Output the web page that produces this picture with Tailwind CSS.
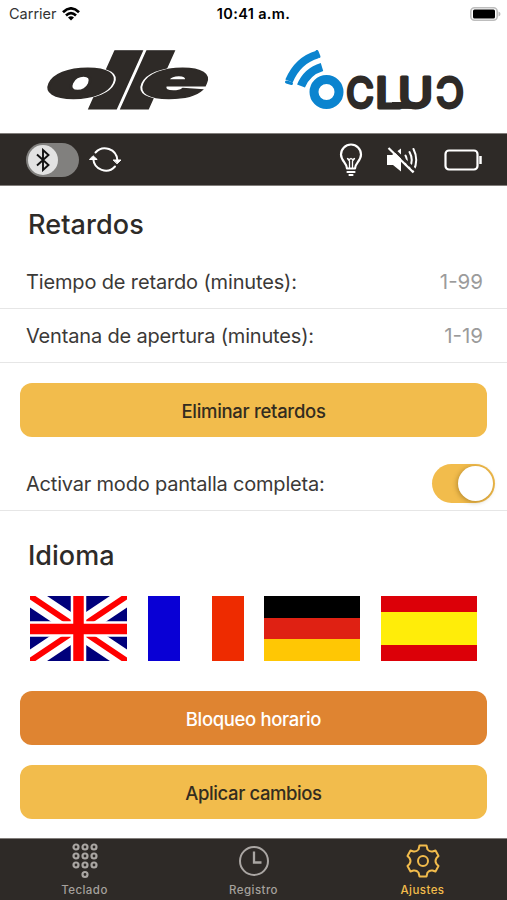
<!DOCTYPE html>
<html lang="es">
<head>
<meta charset="utf-8">
<title>Ajustes</title>
<script src="https://cdn.jsdelivr.net/npm/@tailwindcss/browser@4"></script>
</head>
<body class="w-[507px] h-[900px] overflow-hidden bg-white font-['Inter','Roboto',sans-serif] text-[#2e2b28] flex flex-col">
<!-- Status bar -->
<header class="h-[28px] shrink-0 grid grid-cols-3 items-center text-black">
  <div class="flex items-center gap-[5px] pl-[9px] text-[14.5px] text-[#333]"><span>Carrier</span>
    <svg width="18" height="14" viewBox="0 0 18 14" fill="none" stroke="#000" stroke-width="2.7"><path d="M1 5.2Q9-2.4 17 5.2M4 8.4Q9 3.8 14 8.4"/><path d="M6 10.5Q9 8 12 10.5L9 13.6Z" fill="#000" stroke="none"/></svg>
  </div>
  <div class="text-center text-[14.5px] font-semibold whitespace-nowrap tracking-[0.35px]">10:41 a.m.</div>
  <div class="flex justify-end pr-[6px]"><svg width="31" height="14" viewBox="0 0 31 14"><rect x=".8" y=".8" width="26.4" height="12.4" rx="3.8" fill="#fff" stroke="#bdbdbd" stroke-width="1.6"/><rect x="3" y="2.5" width="22" height="9" rx="1.5"/><path d="M28.500 4.500q2 .7 2 2.500t-2 2.500z" fill="#bbb"/></svg></div>
</header>
<!-- Brands -->
<div class="h-[105px] shrink-0">
<svg width="507" height="105" viewBox="0 28 507 105" font-family="Inter" fill="#2e2a27">
  <g font-weight="900">
    <g stroke="#2e2a27" stroke-width="1">
    <text transform="matrix(1 0 -.45 1 82 109)" font-size="80" textLength="41" lengthAdjust="spacingAndGlyphs">l</text>
    <text transform="matrix(1 0 -.45 1 114 109)" font-size="80" textLength="41" lengthAdjust="spacingAndGlyphs">l</text>
    </g>
    <g style="filter:drop-shadow(2px 0 0 #fff) drop-shadow(-2px 0 0 #fff)" stroke="#2e2a27" stroke-width="1.500">
    <text transform="matrix(1 0 -.45 1 40 98)" font-size="54" textLength="68" lengthAdjust="spacingAndGlyphs">o</text>
    <text transform="matrix(1 0 -.45 1 135 98)" font-size="54" textLength="67" lengthAdjust="spacingAndGlyphs">e</text>
    </g>
  </g>
  <g fill="none" stroke="#0b84cf">
    <circle cx="326.500" cy="92" r="12.500" stroke-width="9"/>
    <path d="M301 86Q307 71.500 322 67" stroke-width="8.500"/>
    <path d="M289 81Q298 60 317.500 54.500" stroke-width="8"/>
    <path d="M286.500 82L291.500 83.500M317 51.500L319 56.500" stroke-width="3" stroke-linejoin="round" stroke-linecap="round"/>
  </g>
  <g font-weight="500" font-size="43" stroke="#2e2a27" stroke-width="2.800" stroke-linejoin="round">
    <text x="346" y="107.500" textLength="28" lengthAdjust="spacingAndGlyphs">C</text>
    <text transform="translate(375 107.500) scale(1.120 1)" letter-spacing="-4">LU</text>
    <text transform="translate(464 107.500) scale(-1 1)" textLength="28" lengthAdjust="spacingAndGlyphs">C</text>
  </g>
  <rect x="392" y="102" width="22" height="6.900"/>
</svg>
</div>
<!-- Device toolbar -->
<div class="h-[53px] shrink-0 bg-[#2e2a27] border-y border-[#817d7a] flex items-center pl-[26px] pr-[25px]">
  <div class="w-[53px] h-[34px] rounded-full bg-[#81807e] p-[2px]">
    <div class="size-[30px] rounded-full bg-[#e2e2e2] flex items-center justify-center"><svg width="14" height="24" viewBox="0 0 14 24" fill="none" stroke="#111" stroke-width="1.9"><path d="M1 6.500L12.500 17 7 22V2L12.500 7 1 17.500"/></svg></div>
  </div>
  <svg class="ml-[10px]" width="33" height="30" viewBox="0 0 33 30" fill="none" stroke="#fff" stroke-width="2" stroke-linecap="round"><path d="M6.500 7.500A12.500 12.500 0 0 1 28.300 15M26 21.500A12.500 12.500 0 0 1 4.300 14"/><path d="M24.500 15H32L28.300 18.500ZM.800 14.500H8.200L4.300 11Z" fill="#fff" stroke-width="1" stroke-linejoin="round"/></svg>
  <div class="ml-auto flex items-center">
    <svg width="24" height="34" viewBox="0 0 24 34" fill="none" stroke="#fff" stroke-width="2.200" stroke-linecap="round" stroke-linejoin="round"><path d="M8 25.500C8 20 2 18 2 11.500A10 10 0 0 1 22 11.500C22 18 16 20 16 25.500ZM8.500 29H15.500M10.500 32H13.500"/><path d="M10.500 25V18L8.500 15.500 10.500 16.500 12 15.500 13.500 16.500 15.500 15.500 13.500 18V25" stroke-width="1.300"/></svg>
    <svg class="ml-[23px]" width="33" height="28" viewBox="0 0 33 28" fill="none" stroke="#fff" stroke-width="2"><path d="M1 9H6L15 2.500V25.500L7 19H1Z" fill="#fff" stroke="none"/><path d="M19.500 9.500Q22 14 19.500 18.500M23.500 6Q28 14 23.500 22M27.500 3Q33 14 27.500 25" stroke-linecap="round"/><path d="M4.500 .5L30 25" stroke="#2e2a27" stroke-width="3"/><path d="M2.500 2L27.500 26.500" stroke-width="2.200"/></svg>
    <svg class="ml-[25px]" width="38" height="22" viewBox="0 0 38 22" fill="none" stroke="#fff" stroke-width="2.200"><rect x="1.500" y="1.500" width="32" height="19" rx="3.500"/><path d="M36.500 7V15" stroke-width="2.500"/></svg>
  </div>
</div>
<!-- Settings -->
<main class="flex-1 flex flex-col">
  <h1 class="h-[69px] pt-[9px] pl-[28px] flex items-center text-[27px] font-medium tracking-[0.100px]"><span>Retardos</span></h1>
  <div class="h-[54px] border-b border-[#e6e6e6] pl-[26px] pr-[24px] flex items-center justify-between text-[20px] text-[#3b3937]"><span class="tracking-[-0.150px]">Tiempo de retardo (minutes):</span><span class="pt-px text-[#9b9b9b] text-[20.500px]">1-99</span></div>
  <div class="h-[54px] border-b border-[#e6e6e6] pl-[26px] pr-[24px] flex items-center justify-between text-[20px] text-[#3b3937]"><span class="tracking-[-0.170px]">Ventana de apertura (minutes):</span><span class="pt-px text-[#9b9b9b] text-[20.500px]">1-19</span></div>
  <button class="mt-[20px] ml-[20px] w-[467px] h-[54px] pt-[3px] rounded-[12px] bg-[#f2bc4c] text-[18.500px] tracking-[-0.300px] font-medium text-[#332c20]">Eliminar retardos</button>
  <div class="mt-[20px] h-[54px] border-b border-[#e6e6e6] pl-[26px] pr-[12px] flex items-center justify-between text-[20px] text-[#3b3937]"><span class="tracking-[-0.200px]">Activar modo pantalla completa:</span>
    <div class="w-[63px] h-[39px] rounded-full bg-[#f2bc4c] p-[2px] flex justify-end"><div class="size-[35px] rounded-full bg-white shadow-[-1px_1px_5px_rgba(90,60,0,0.4)]"></div></div>
  </div>
  <h2 class="h-[85px] pt-[5px] pl-[28px] flex items-center text-[27px] font-medium"><span>Idioma</span></h2>
  <div class="pl-[30px] pr-[30px] flex justify-between h-[65px]">
    <svg width="97" height="65" viewBox="0 0 97 65"><path fill="#00007b" d="M0 0H97V65H0Z"/><path d="M0 0L97 65M97 0L0 65" stroke="#fff" stroke-width="19"/><path d="M0 0L97 65M97 0L0 65" stroke="#f00" stroke-width="6"/><path d="M48.500 0V65M0 33H97" stroke="#fff" stroke-width="15.500"/><path d="M48.500 0V65M0 33H97" stroke="#f00" stroke-width="10.500"/></svg>
    <div class="w-[96px] grid grid-cols-3"><i class="bg-[#0900d5]"></i><i class="bg-white"></i><i class="bg-[#ee2b00]"></i></div>
    <div class="w-[96px] grid grid-rows-3"><i class="bg-black"></i><i class="bg-[#df2113]"></i><i class="bg-[#ffc704]"></i></div>
    <div class="w-[96px] grid grid-rows-[1fr_2fr_1fr]"><i class="bg-[#dc0008]"></i><i class="bg-[#ffed09]"></i><i class="bg-[#dc0008]"></i></div>
  </div>
  <button class="mt-[30px] ml-[20px] w-[467px] h-[54px] pt-[3px] rounded-[12px] bg-[#df8431] text-[18.500px] tracking-[-0.350px] font-medium text-white">Bloqueo horario</button>
  <button class="mt-[20px] ml-[20px] w-[467px] h-[54px] pt-[3px] rounded-[12px] bg-[#f2bc4c] text-[18.500px] tracking-[-0.400px] font-medium text-[#332c20]">Aplicar cambios</button>
</main>
<!-- Tabs -->
<nav class="h-[62px] shrink-0 bg-[#2e2a27] border-t border-[#817d7a] grid grid-cols-3 text-[11.500px] leading-[17px] font-medium tracking-[0.450px] text-[#a5a19d]">
  <div class="flex flex-col items-center pt-[3px] gap-[2px]"><svg width="28" height="38" viewBox="0 0 28 38" fill="none" stroke="#aaa6a3" stroke-width="2.200"><circle cx="5" cy="5" r="2.500"/><circle cx="14" cy="5" r="2.500"/><circle cx="23" cy="5" r="2.500"/><circle cx="5" cy="14" r="2.500"/><circle cx="14" cy="14" r="2.500"/><circle cx="23" cy="14" r="2.500"/><circle cx="5" cy="23" r="2.500"/><circle cx="14" cy="23" r="2.500"/><circle cx="23" cy="23" r="2.500"/><circle cx="14" cy="32.500" r="2.500"/></svg><span>Teclado</span></div>
  <div class="flex flex-col items-center pt-[3px] gap-[2px]"><svg width="34" height="38" viewBox="0 0 34 38" fill="none" stroke="#aaa6a3" stroke-width="2"><circle cx="17" cy="19" r="14"/><path d="M17 9.500V20.500H24.500" stroke-width="2.300"/></svg><span>Registro</span></div>
  <div class="flex flex-col items-center pt-[3px] gap-[2px] text-[#f2bc4c]"><svg width="36" height="38" viewBox="0 0 36 38" fill="none" stroke="#f2bc4c" stroke-width="2" stroke-linejoin="round"><circle cx="18" cy="19" r="5"/><path d="M14.500 3.500H21.500L22.500 7.500Q24.500 10 27.500 9.500L30.500 8.500 33.500 14 31.500 16Q29.500 19 31.500 22L33.500 24 30.500 29.500 27.500 28.500Q24.500 28 22.500 30.500L21.500 34.500H14.500L13.500 30.500Q11.500 28 8.500 28.500L5.500 29.500 2.500 24 4.500 22Q6.500 19 4.500 16L2.500 14 5.500 8.500 8.500 9.500Q11.500 10 13.500 7.500Z"/></svg><span>Ajustes</span></div>
</nav>
</body>
</html>
